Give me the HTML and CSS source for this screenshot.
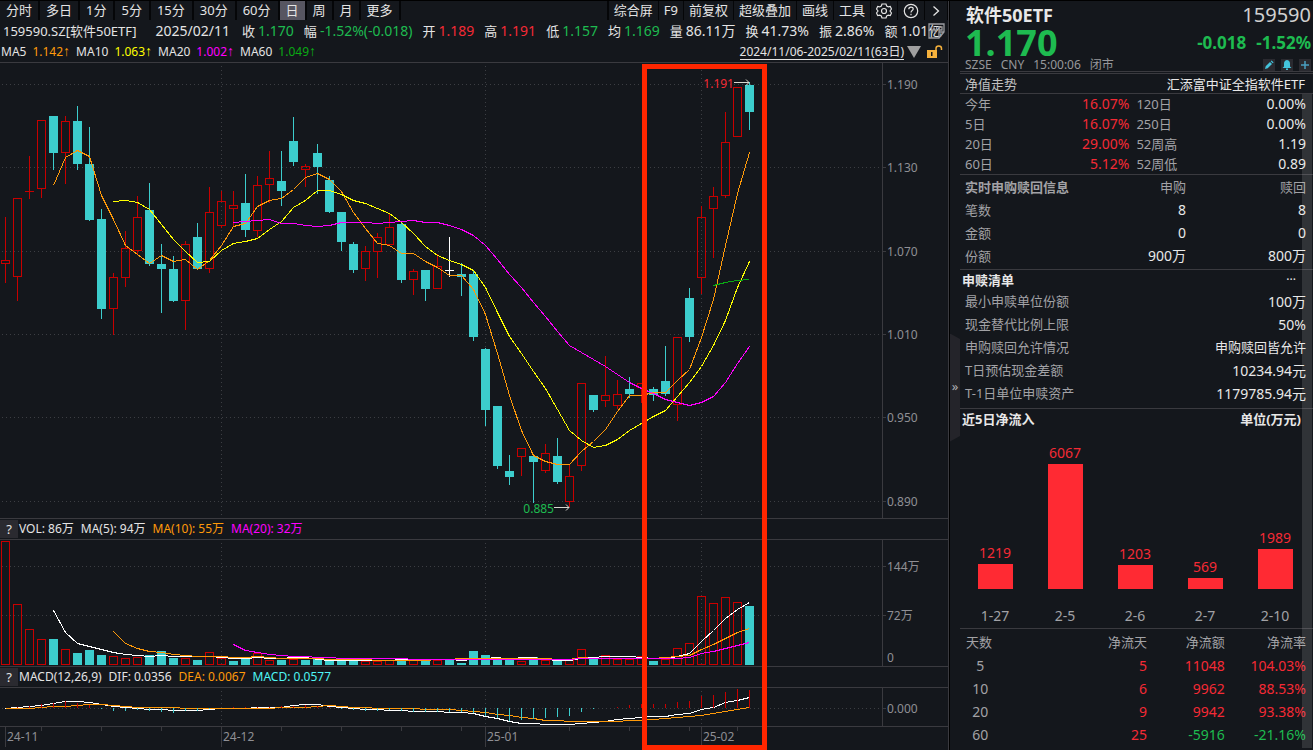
FILE: index.html
```html
<!DOCTYPE html>
<html lang="zh-CN">
<head>
<meta charset="utf-8">
<title>159590.SZ 软件50ETF</title>
<link rel="stylesheet" href="styles.css">
</head>
<body>
<div class="terminal">
  <main class="main">
    <nav class="toolbar" aria-label="周期与工具">
      <div class="tabs">
        <button>分时</button><button>多日</button><button class="minute">1分</button><button class="minute">5分</button><button class="minute">15分</button><button class="minute">30分</button><button class="minute">60分</button><button class="active">日</button><button>周</button><button>月</button><button>更多</button>
      </div>
      <div class="tabs tools">
        <button>综合屏</button><button>F9</button><button>前复权</button><button>超级叠加</button><button>画线</button><button>工具</button>
        <button aria-label="设置"><svg width="16" height="16" viewBox="0 0 16 16" fill="none" stroke="currentColor" stroke-width="1.2"><path d="M6 1h4l.7 2 1.6.9 2-.4L15.5 6 14 8l1.5 2-1.2 2.500-2-.4-1.600.9-.7 2H6l-.7-2-1.600-.9-2 .4L.5 10 2 8 .5 6l1.200-2.500 2 .4L5.300 3z"/><circle cx="8" cy="8" r="2.500"/></svg></button>
        <button aria-label="帮助"><svg width="16" height="16" viewBox="0 0 16 16" fill="none" stroke="currentColor" stroke-width="1.2"><circle cx="8" cy="8" r="6.700"/><path d="M5.800 6.200C5.800 3.300 10.200 3.400 10.200 6 10.200 7.600 8 7.600 8 9.500"/><path d="M8 10.700v1.500"/></svg></button>
        <button aria-label="展开"><svg width="12" height="14" viewBox="0 0 12 14" fill="none" stroke="currentColor" stroke-width="1.300"><path d="M3.500 2.500 8.500 7l-5 4.500"/></svg></button>
      </div>
    </nav>

    <div class="quote">
      <span class="code">159590.SZ[软件50ETF]</span>
      <span class="date">2025/02/11</span>
      <span><i>收</i><b class="down">1.170</b></span>
      <span><i>幅</i><b class="down">-1.52%(-0.018)</b></span>
      <span><i>开</i><b class="up">1.189</b></span>
      <span><i>高</i><b class="up">1.191</b></span>
      <span><i>低</i><b class="down">1.157</b></span>
      <span><i>均</i><b class="down">1.169</b></span>
      <span><i>量</i><b>86.11万</b></span>
      <span><i>换</i><b>41.73%</b></span>
      <span><i>振</i><b>2.86%</b></span>
      <span><i>额</i><b>1.01亿</b></span>
      <button class="wp" aria-label="窗口"><svg width="17" height="16" viewBox="0 0 17 16" fill="none" stroke="#9b9ca0" stroke-width="1.300"><path d="M1 1h15v8l-5 6H1zM16 9h-5v6M3 4l1.500 5L6 5l1.500 4L9 4M11 9V4h3v3h-3"/></svg></button>
    </div>

    <div class="averages">
      <span>MA5</span><span class="ma5">1.142<i>↑</i></span>
      <span>MA10</span><span class="ma10">1.063<i>↑</i></span>
      <span>MA20</span><span class="ma20">1.002<i>↑</i></span>
      <span>MA60</span><span class="ma60">1.049<i>↑</i></span>
      <a class="range" href="#range">2024/11/06-2025/02/11(63日)</a>
      <svg width="14" height="14" viewBox="0 0 14 14"><path d="M0 1h14L7 13z" fill="#a0a0a0"/></svg>
      <svg class="lock" width="16" height="14" viewBox="0 0 16 14"><path d="M0 5h10v8H0z" fill="#f5b13c"/><path d="M9 5V3.500C9 .3 14.500.3 14.500 3.500V5" fill="none" stroke="#f5b13c" stroke-width="1.500"/><path d="M4 7h1.500v4H4z" fill="#14171c"/></svg>
    </div>

    <div class="charts">
      <div class="panel price"><svg id="price" role="img" aria-label="K线图"></svg></div>
      <div class="legend"><button aria-label="成交量说明">?</button><span>VOL: 86万</span><span>MA(5): 94万</span><span class="ma5">MA(10): 55万</span><span class="ma20">MA(20): 32万</span></div>
      <div class="panel volume"><svg id="volume" role="img" aria-label="成交量"></svg></div>
      <div class="legend"><button aria-label="MACD说明">?</button><span>MACD(12,26,9)</span><span>DIF: 0.0356</span><span class="ma5">DEA: 0.0067</span><span class="aqua">MACD: 0.0577</span></div>
      <div class="panel macd"><svg id="macd" role="img" aria-label="MACD"></svg></div>
      <div class="panel dates"><svg id="dates" role="img" aria-label="日期轴"></svg></div>
      <div class="highlight"></div>
    </div>
  </main>

  <div class="splitter"><button aria-label="收起侧栏">»</button></div>

  <aside class="side">
    <header class="head">
      <div class="row"><h1>软件50ETF</h1><span class="num">159590</span></div>
      <div class="row last"><strong class="down">1.170</strong><span class="change down"><b>-0.018</b><b>-1.52%</b></span></div>
      <div class="row meta"><span>SZSE</span><span>CNY</span><span>15:00:06</span><span>闭市</span>
        <div class="acts">
          <button aria-label="编辑"><svg width="10" height="10" viewBox="0 0 10 10"><path d="M1 9l.7-2.700L6 2l2 2-4.300 4.300zM6.700 1.300 7.600.5l2 2-.9.8z" fill="#43c4dc"/></svg></button>
          <button aria-label="提醒"><svg width="10" height="10" viewBox="0 0 10 10"><path d="M5 0c2.500.5 3 2 3 4v2.500L9.500 8h-9L2 6.500V4c0-2 .5-3.500 3-4zM4 8.500h2V10H4z" fill="#43c4dc"/></svg></button>
          <button aria-label="添加"><svg width="10" height="10" viewBox="0 0 10 10"><path d="M5 1v8M1 5h8" stroke="#4a9fc0" stroke-width="1.500"/></svg></button>
        </div>
      </div>
    </header>

    <div class="row nav"><span>净值走势</span><a href="#fund">汇添富中证全指软件ETF</a></div>

    <table class="perf">
      <tr><th>今年</th><td class="up">16.07%</td><th>120日</th><td>0.00%</td></tr>
      <tr><th>5日</th><td class="up">16.07%</td><th>250日</th><td>0.00%</td></tr>
      <tr><th>20日</th><td class="up">29.00%</td><th>52周高</th><td>1.19</td></tr>
      <tr><th>60日</th><td class="up">5.12%</td><th>52周低</th><td>0.89</td></tr>
    </table>

    <table class="subs">
      <tr><th class="title">实时申购赎回信息</th><th>申购</th><th>赎回</th></tr>
      <tr><th>笔数</th><td>8</td><td>8</td></tr>
      <tr><th>金额</th><td>0</td><td>0</td></tr>
      <tr><th>份额</th><td>900万</td><td>800万</td></tr>
    </table>

    <section class="list">
      <div class="row caption"><h2>申赎清单</h2><button aria-label="更多">···</button></div>
      <dl>
        <div><dt>最小申赎单位份额</dt><dd>100万</dd></div>
        <div><dt>现金替代比例上限</dt><dd>50%</dd></div>
        <div><dt>申购赎回允许情况</dt><dd class="cjk">申购赎回皆允许</dd></div>
        <div><dt>T日预估现金差额</dt><dd>10234.94元</dd></div>
        <div><dt>T-1日单位申赎资产</dt><dd>1179785.94元</dd></div>
      </dl>
    </section>

    <section class="flow">
      <div class="row caption"><h2>近5日净流入</h2><h2>单位(万元)</h2></div>
      <div class="bars">
        <div><span>1219</span><i style="height:25px"></i></div>
        <div><span>6067</span><i style="height:125px"></i></div>
        <div><span>1203</span><i style="height:24px"></i></div>
        <div><span>569</span><i style="height:11px"></i></div>
        <div><span>1989</span><i style="height:40px"></i></div>
      </div>
      <div class="days"><span>1-27</span><span>2-5</span><span>2-6</span><span>2-7</span><span>2-10</span></div>
    </section>

    <table class="rates">
      <tr><th>天数</th><th>净流天</th><th>净流额</th><th>净流率</th></tr>
      <tr class="up"><th>5</th><td>5</td><td>11048</td><td>104.03%</td></tr>
      <tr class="up"><th>10</th><td>6</td><td>9962</td><td>88.53%</td></tr>
      <tr class="up"><th>20</th><td>9</td><td>9942</td><td>93.38%</td></tr>
      <tr class="up"><th>60</th><td>25</td><td class="down">-5916</td><td class="down">-21.16%</td></tr>
    </table>
    <div class="scroll"></div>
  </aside>
</div>
<script src="charts.js"></script>
</body>
</html>
```

FILE: styles.css
```css
* { box-sizing: border-box; }
body {
  margin: 0;
  background: #14171c;
  color: #e4e4e4;
  font: 13px/20px "Noto Sans", "Noto Sans CJK SC", sans-serif;
}
button {
  margin: 0;
  padding: 0;
  border: 0;
  background: none;
  color: inherit;
  font: inherit;
}
h1, h2, dl, dd { margin: 0; }
i { font-style: normal; }
a { color: inherit; text-decoration: none; }
table { width: 100%; border-collapse: collapse; }

.up { color: #f52a35; }
.down { color: #1ebb50; }
.ma5 { color: #ff9a0a; }
.ma10 { color: #ffff00; }
.ma20 { color: #ff00ff; }
.ma60 { color: #0aaa14; }
.aqua { color: #4ff5f5; }

.terminal {
  display: grid;
  grid-template-columns: minmax(0, 948fr) 12px minmax(0, 353fr);
  min-height: 100vh;
  border-top: 1px solid #000;
}
.main { display: flex; flex-direction: column; min-width: 0; }

.toolbar { display: flex; justify-content: space-between; height: 19px; }
.tabs { display: flex; }
.tabs button {
  padding: 0 6px;
  border-right: 2px solid #050608;
  line-height: 19px;
  white-space: nowrap;
}
.tabs .minute { padding-right: 7px; }
.tabs .active { background: #575661; }
.tools { border-left: 2px solid #050608; }
.tools button { padding: 0 5px; border-right-width: 1px; }
.tools svg { display: block; }

.quote {
  position: relative;
  display: flex;
  gap: 10px;
  height: 22px;
  padding-left: 3px;
  line-height: 22px;
  white-space: nowrap;
  overflow: hidden;
}
.quote span { display: flex; gap: 3px; }
.quote b, .quote .date { font-size: 14px; font-weight: 400; }
.quote .code { margin-right: 9px; }
.quote .date { margin-right: 2px; }
.wp { position: absolute; top: 3px; right: 3px; }
.wp svg { display: block; }

.averages {
  display: flex;
  align-items: center;
  gap: 6px;
  height: 20px;
  padding: 0 5px 0 1px;
  font-size: 12px;
  white-space: nowrap;
}
.averages i { font: 14px/14px "Liberation Sans", sans-serif; }
.range {
  margin: 0 -3px 0 auto;
  border-bottom: 1px solid #e4e4e4;
  line-height: 15px;
}

.charts {
  position: relative;
  flex: 1;
  display: grid;
  grid-template-rows: 456fr 21px 127fr 21px 39fr 24fr;
  min-height: 600px;
}
.panel { position: relative; min-height: 0; border-top: 1px solid #3a3a3f; }
.panel svg { position: absolute; width: 100%; height: 100%; }
.legend {
  display: flex;
  align-items: center;
  gap: 7px;
  border-top: 1px solid #3a3a3f;
  font-size: 12px;
  white-space: nowrap;
}
.legend button { width: 18px; height: 18px; margin-right: -6px; background: #2a2a30; font-size: 13px; line-height: 18px; }
.highlight {
  position: absolute;
  top: 2px;
  bottom: 0;
  left: 67.7%;
  width: 13.2%;
  border: 5px solid #ff2600;
}

.grid { stroke: #3c3e43; stroke-dasharray: 1 3; }
.axis { stroke: #3a3a3f; }
.tick { fill: #8f8f94; font-size: 12px; }
.line { fill: none; stroke-width: 1; }
svg .r { fill: none; stroke: #c80000; }
svg .c { fill: #3ccdcd; stroke: #3ccdcd; }
svg .w { fill: #fff; stroke: #fff; }
.arrow { fill: none; stroke: #d8d8d0; }
.tag-up { fill: #f52a35; font-size: 12px; }
.tag-down { fill: #1ebb50; font-size: 12px; }

.splitter {
  display: flex;
  align-items: center;
  border-left: 1px solid #3a3a3f;
  background: linear-gradient(90deg, #000 1px, #14171c 1px);
}
.splitter button {
  width: 10px;
  height: 108px;
  margin: 24px 0 0 1px;
  padding-bottom: 4px;
  background: #24242a;
  color: #b0b0b4;
  clip-path: polygon(0 0, 100% 5%, 100% 95%, 0 100%);
}

.side { position: relative; min-width: 0; color: #e8e8e8; }
.row { display: flex; align-items: center; justify-content: space-between; }
.head { height: 73px; padding: 0 2px 0 5px; border-bottom: 3px double #3a3a3f; }
.head .row { height: 27px; padding-left: 1px; }
.head h1 { font-size: 18px; font-weight: 700; }
.head .num { font-size: 20px; color: #d0d0d0; }
.head .last { height: 29px; padding-left: 0; line-height: 29px; }
.head strong { font-size: 36px; }
.change { display: flex; gap: 10px; font-size: 17px; }
.head .meta { gap: 9px; height: 16px; padding-left: 0; color: #97979b; font-size: 12px; line-height: 16px; }
.acts { display: flex; gap: 6px; margin-left: auto; }
.acts button { width: 12px; height: 12px; background: #2a2a30; }
.acts svg { display: block; margin: 1px; }

.nav { height: 20px; padding: 0 8px 0 5px; border-bottom: 1px solid #3a3a3f; color: #c0c0c0; }
.nav a { color: #e8e8e8; }

th { padding: 0; color: #a2a2a6; font-weight: 400; text-align: left; }
td { padding: 0; font-size: 14px; text-align: right; }
th:first-child { padding-left: 5px; }
tr > :last-child { padding-right: 7px; }
.perf { border-bottom: 1px solid #3a3a3f; table-layout: fixed; }
.perf tr { height: 20px; }
.perf th { width: 22%; }
.perf td { width: 26%; }
.perf td:last-child { width: 30%; }
.perf th + td + th { padding-left: 7px; }

.subs { table-layout: fixed; }
.subs tr { height: 23px; }
.subs th + th { text-align: right; }
.subs tr > :first-child { width: 40%; }
.subs tr > :nth-child(2) { width: 24%; }
.subs .title { font-weight: 700; }

.caption { height: 20px; padding: 0 12px 0 2px; }
.caption h2 { font-size: 13px; font-weight: 700; }
.caption button { margin-right: 5px; font-size: 12px; }
.list { margin-top: 2px; padding-bottom: 3px; border: 1px solid #3a3a3f; border-width: 1px 0; }
.list dl div { display: flex; justify-content: space-between; height: 23px; padding: 0 7px 0 5px; line-height: 23px; }
.list dt { color: #a2a2a6; }
.list dd { font-size: 14px; }
.list .cjk { font-size: 13px; }

.flow { border-bottom: 1px solid #3a3a3f; }
.bars, .days { display: grid; grid-template-columns: repeat(5, 1fr); padding-right: 3px; text-align: center; font-size: 14px; }
.bars { height: 160px; align-items: end; color: #f52a35; }
.bars div { display: flex; flex-direction: column; align-items: center; }
.bars span { line-height: 22px; }
.bars i { width: 50%; background: #ff2a33; }
.days { padding-top: 17px; height: 39px; color: #a2a2a6; }

.rates { table-layout: fixed; }
.rates tr { height: 23px; }
.rates tr:first-child { height: 25px; }
.rates th { width: 31%; }
.rates th + th { width: 22%; text-align: right; }
.rates th + th:last-child { width: 25%; }
.rates tr:first-child th:first-child { padding-left: 6px; }
.rates th:first-child { padding-left: 0; }
.rates tr:not(:first-child) th { padding-right: 69px; font-size: 14px; text-align: center; }
.scroll {
  position: absolute;
  top: 93px;
  right: 1px;
  bottom: 2px;
  width: 10px;
  background: rgba(255, 255, 255, .12);
}
```

FILE: charts.js
```js
// Candles: kind, high, body top, body bottom, low (levels on the 63..518 price scale)
const candles = `r217 260 264 283|r198 198 277 301|r156 191 191 199|r120 120 189 198|c116 116 153 170|r116 121 153 184|c106 121 164 170|c127 164 220 221|c209 219 309 319|r273 277 309 335|r231 248 278 287|r196 217 251 255|c183 210 264 266|c244 264 269 313|c256 269 301 302|r241 244 301 330|c223 237 269 270|r187 212 269 273|r191 201 226 228|r191 205 209 226|c174 203 230 237|r176 185 231 237|r151 178 185 203|c151 181 191 206|c117 141 162 166|r164 166 170 187|c144 153 167 194|c176 180 212 213|c212 212 242 251|c242 244 270 273|r246 251 269 281|r233 237 252 278|r213 227 245 245|c222 224 280 283|r269 271 280 295|c270 270 289 301|r254 266 289 289|w237 270 271 277|c263 274 277 296|c270 274 337 341|c348 349 410 426|c406 406 466 469|c455 471 477 485|r448 448 457 476|c455 456 462 503|r444 453 471 473|c438 456 482 484|r465 476 502 507|r383 383 466 471|c395 395 410 412|r356 395 401 407|r380 394 406 409|c377 389 394 398|r383 383 388 403|c387 389 395 401|c346 381 394 396|r337 337 405 421|c288 298 337 342|r206 217 278 294|r187 196 209 258|r112 142 196 198|r87 87 137 137|c82 85 112 130`
  .split("|").map(s => [s[0], ...s.slice(1).split(" ").map(Number)]);

const priceLines = [
  ["#ff9a0a", 4, [185,157,150,156,195,219,245,254,263,255,261,259,269,260,245,226,223,206,200,198,189,177,173,179,191,212,228,243,245,253,253,261,267,275,275,289,314,353,395,430,455,461,464,464,451,441,429,411,395,395,392,392,380,369,337,299,245,193,152]],
  ["#ffff00", 9, [201,200,202,209,224,239,251,262,261,250,243,241,238,229,221,207,200,190,190,194,200,203,208,213,222,233,246,255,260,264,270,287,312,336,353,371,388,409,430,440,447,445,439,430,423,416,410,396,382,366,345,320,287,261]],
  ["#ff00ff", 19, [222,221,220,219,223,223,225,226,225,222,222,222,223,222,221,220,222,222,225,229,235,245,259,274,287,302,316,331,345,352,359,366,374,382,388,393,399,402,405,402,396,382,363,346]],
  ["#0aaa14", 59, [285,282,280,279]]
];

// Volume bars: kind and top level on the 540..666 scale
const volumes = "r541 r604 r629 r639 c639 r649 c653 c650 c655 r656 r658 r657 c655 c651 c658 r658 c660 r652 r658 c661 c658 r653 r660 c660 r659 c660 c659 c661 c661 c661 r661 r661 r660 c658 r660 c659 r660 c660 c663 c651 c655 c660 c659 r661 c657 r660 c660 r660 r649 c659 r655 r659 r659 r656 c661 r659 r648 r643 r596 r603 r597 r602 c606"
  .split(" ").map(s => [s[0], +s.slice(1)]);
const volumeLines = [
  ["#ffffff", 4, [610,632,643,646,649,652,654,655,656,655,656,656,656,656,657,658,658,657,658,658,657,657,659,660,660,660,660,660,660,659,659,660,659,659,660,659,658,657,659,657,657,659,660,660,658,657,656,656,656,657,658,658,656,653,641,630,618,609,602]],
  ["#ff9a0a", 9, [631,643,648,651,652,654,655,656,656,656,657,657,656,657,658,658,658,658,659,659,659,659,660,660,660,660,660,659,659,658,658,658,658,658,658,658,658,659,659,657,658,658,658,658,658,658,657,656,655,649,644,638,632,628]],
  ["#ff00ff", 19, [644,650,652,654,655,656,656,657,657,658,658,658,658,658,658,659,659,659,659,659,659,659,659,659,659,659,659,659,659,658,658,658,658,658,658,658,658,658,657,653,651,648,645,642]]
];

const macdBars = [0,-1,-2,-4,-5,-7,-5,-3,1,3,3,2,3,4,5,3,3,1,0,-1,-1,-1,-1,-2,-2,-3,-2,-1,1,2,3,3,2,3,4,4,4,4,4,5,8,10,13,12,11,10,9,8,4,1,0,-1,-3,-4,-4,-4,-6,-7,-12,-13,-16,-19,-18];
const macdLines = [
  ["#ffffff", 0, [708,707,706,705,703,701,701,702,704,706,707,708,709,709,710,710,710,709,708,708,708,707,707,707,705,704,704,706,707,708,709,709,710,710,711,711,711,712,712,713,716,718,721,723,723,724,724,724,723,722,721,719,718,717,716,716,714,713,709,707,702,700,697]],
  ["#ff9a0a", 0, [708,708,708,707,706,706,705,704,704,705,706,707,707,707,707,708,708,708,708,708,708,708,708,707,707,707,706,705,706,707,707,708,708,708,708,709,709,709,710,711,712,714,715,717,718,720,720,721,721,721,721,721,720,720,719,718,717,716,715,713,711,709,707]]
];

const months = [[0, "24-11"], [18, "24-12"], [40, "25-01"], [58, "25-02"]];
const minor = [3, 8, 13, 23, 28, 33, 38, 42, 47, 52, 57, 61];

function panel(id, top, bottom) {
  const svg = document.getElementById(id);
  const box = svg.getBoundingClientRect();
  const w = box.width, h = box.height;
  const edge = Math.round(w * 882 / 948);
  const k = h / (bottom - top);
  const out = [];
  return {
    w, h, edge, k,
    x: i => Math.round(edge / 882 * (5 + 12 * i)),
    y: v => Math.round((v - top) * k),
    add: s => out.push(s),
    line(cls, x1, y1, x2, y2) {
      out.push(`<path class="${cls}" d="M${x1} ${y1}L${x2} ${y2}" shape-rendering="crispEdges"/>`);
    },
    text(cls, x, y, t, anchor = "start") {
      out.push(`<text class="${cls}" x="${x}" y="${y}" text-anchor="${anchor}">${t}</text>`);
    },
    frame(levels) {
      months.slice(1).forEach(([i]) => this.line("grid", this.x(i) + .5, 3, this.x(i) + .5, h));
      this.line("axis", edge + .5, 0, edge + .5, h);
      levels.forEach(([v, t, grid]) => {
        const y = this.y(v);
        if (grid) {
          this.line("grid", 2, y + .5, edge, y + .5);
          this.line("axis", edge, y + .5, edge + 4, y + .5);
        }
        this.text("tick", edge + 5, y + 5, t);
      });
    },
    box(kind, i, a, b) {
      const x = this.x(i), y1 = this.y(a), y2 = this.y(b);
      if (y2 - y1 < 2) {
        this.line(kind, x - 4, y1 + .5, x + 5, y1 + .5);
        return;
      }
      out.push(`<rect class="${kind}" x="${x - 3.5}" y="${y1 + .5}" width="8" height="${y2 - y1 - 1}" shape-rendering="crispEdges"/>`);
    },
    series(list) {
      list.forEach(([color, start, ys]) => {
        const pts = ys.map((v, n) => `${this.x(start + n) + .5},${this.y(v) + .5}`).join(" ");
        out.push(`<polyline class="line" stroke="${color}" points="${pts}" shape-rendering="crispEdges"/>`);
      });
    },
    done() { svg.innerHTML = out.join(""); }
  };
}

function draw() {
  const p = panel("price", 63, 518);
  p.frame([[84, "1.190", 1], [167, "1.130", 1], [251, "1.070", 1], [334, "1.010", 1], [417, "0.950", 1], [501, "0.890", 1]]);
  candles.forEach(([kind, high, top, bottom, low], i) => {
    const x = p.x(i) + .5;
    if (high < top) p.line(kind, x, p.y(high), x, p.y(top));
    if (low > bottom) p.line(kind, x, p.y(bottom), x, p.y(low));
    p.box(kind, i, top, bottom);
  });
  p.series(priceLines);
  const hx = p.x(62), hy = p.y(82) + .5, lx = p.x(47), ly = p.y(507) + .5;
  p.text("tag-up", hx - 15, hy + 5, "1.191", "end");
  p.add(`<path class="arrow" d="M${hx - 15} ${hy}h15m-3-3 3 3-3 3"/>`);
  p.text("tag-down", lx - 15, ly + 5, "0.885", "end");
  p.add(`<path class="arrow" d="M${lx - 15} ${ly}h15m-3-3 3 3-3 3"/>`);
  p.done();

  const v = panel("volume", 540, 666);
  v.frame([[566, "144万", 1], [615, "72万", 1], [657, "0", 0]]);
  volumes.forEach(([kind, top], i) => v.box(kind, i, top, 665));
  v.series(volumeLines);
  v.done();

  const m = panel("macd", 688, 726);
  m.frame([[708, "0.000", 1]]);
  m.series(macdLines);
  macdBars.forEach((d, i) => {
    if (d) m.line(d < 0 ? "r" : "c", m.x(i) + .5, m.y(708), m.x(i) + .5, m.y(708 + d));
  });
  m.done();

  const d = panel("dates", 727, 750);
  minor.forEach(i => d.line("axis", d.x(i) + .5, 0, d.x(i) + .5, 4));
  months.forEach(([i, t]) => {
    d.line("axis", d.x(i) + .5, 0, d.x(i) + .5, d.h - 3);
    d.text("tick", d.x(i) + 2, 14, t);
  });
  d.done();
}

draw();
window.addEventListener("resize", draw);
```
